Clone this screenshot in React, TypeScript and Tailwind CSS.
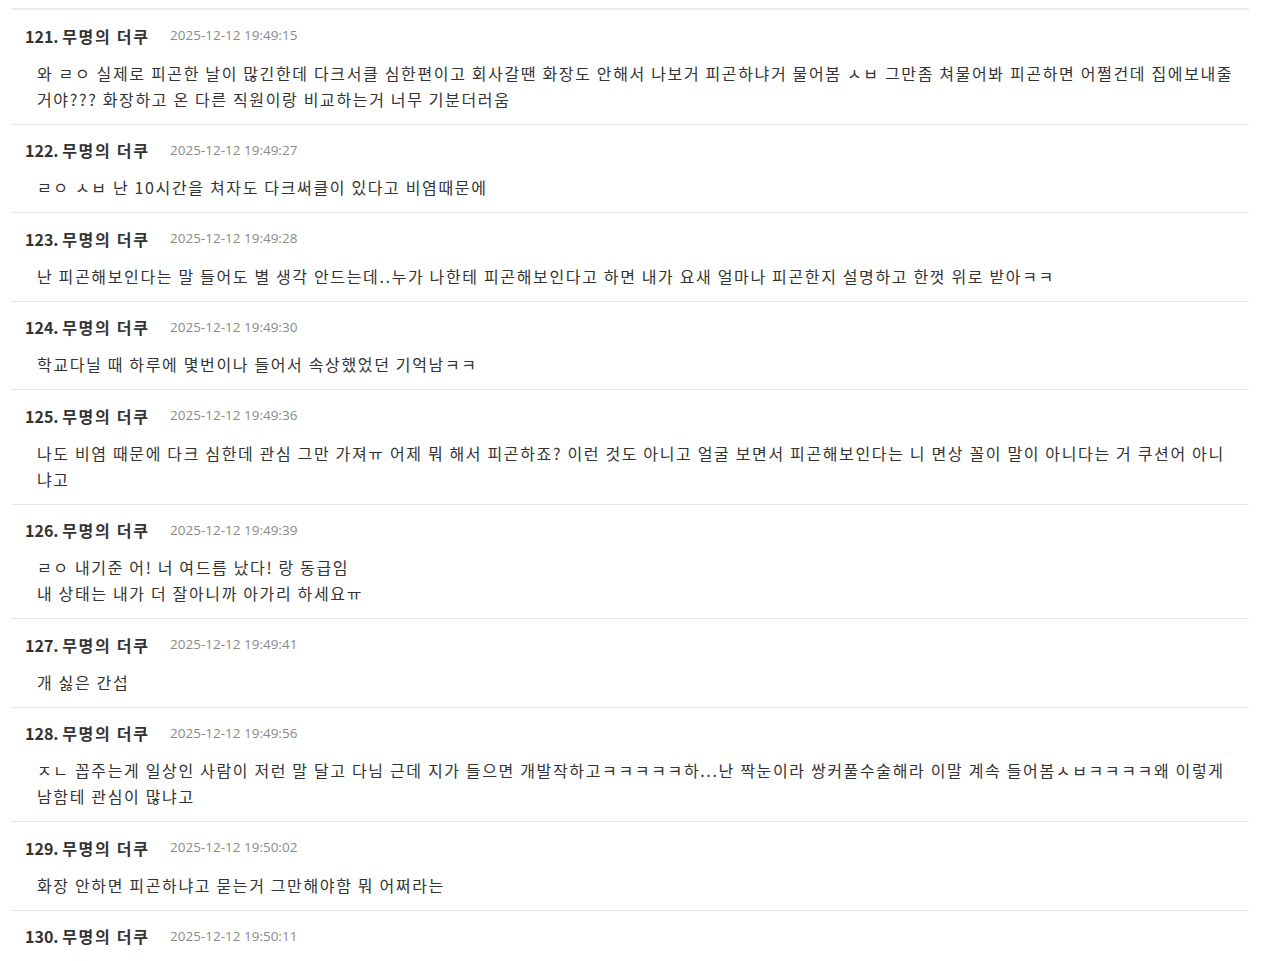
import React from "react";

type Item = { n: number; time: string; lines: string[] };

const items: Item[] = [
  {
    n: 121,
    time: "2025-12-12 19:49:15",
    lines: [
      "와 ㄹㅇ 실제로 피곤한 날이 많긴한데 다크서클 심한편이고 회사갈땐 화장도 안해서 나보거 피곤하냐거 물어봄 ㅅㅂ 그만좀 쳐물어봐 피곤하면 어쩔건데 집에보내줄 거야??? 화장하고 온 다른 직원이랑 비교하는거 너무 기분더러움",
    ],
  },
  { n: 122, time: "2025-12-12 19:49:27", lines: ["ㄹㅇ ㅅㅂ 난 10시간을 쳐자도 다크써클이 있다고 비염때문에"] },
  {
    n: 123,
    time: "2025-12-12 19:49:28",
    lines: [
      "난 피곤해보인다는 말 들어도 별 생각 안드는데..누가 나한테 피곤해보인다고 하면 내가 요새 얼마나 피곤한지 설명하고 한껏 위로 받아ㅋㅋ",
    ],
  },
  { n: 124, time: "2025-12-12 19:49:30", lines: ["학교다닐 때 하루에 몇번이나 들어서 속상했었던 기억남ㅋㅋ"] },
  {
    n: 125,
    time: "2025-12-12 19:49:36",
    lines: [
      "나도 비염 때문에 다크 심한데 관심 그만 가져ㅠ 어제 뭐 해서 피곤하죠? 이런 것도 아니고 얼굴 보면서 피곤해보인다는 니 면상 꼴이 말이 아니다는 거 쿠션어 아니냐고",
    ],
  },
  {
    n: 126,
    time: "2025-12-12 19:49:39",
    lines: ["ㄹㅇ 내기준 어! 너 여드름 났다! 랑 동급임", "내 상태는 내가 더 잘아니까 아가리 하세요ㅠ"],
  },
  { n: 127, time: "2025-12-12 19:49:41", lines: ["개 싫은 간섭"] },
  {
    n: 128,
    time: "2025-12-12 19:49:56",
    lines: [
      "ㅈㄴ 꼽주는게 일상인 사람이 저런 말 달고 다님 근데 지가 들으면 개발작하고ㅋㅋㅋㅋㅋ하...난 짝눈이라 쌍커풀수술해라 이말 계속 들어봄ㅅㅂㅋㅋㅋㅋ왜 이렇게 남함테 관심이 많냐고",
    ],
  },
  { n: 129, time: "2025-12-12 19:50:02", lines: ["화장 안하면 피곤하냐고 묻는거 그만해야함 뭐 어쩌라는"] },
  { n: 130, time: "2025-12-12 19:50:11", lines: [] },
];

export default function App() {
  return (
    <div
      className="bg-white min-h-screen pt-[8px] pl-[12px] pr-[17px]"
      style={{ fontFamily: '"Noto Sans CJK KR", sans-serif' }}
    >
      <div className="border-t-2 border-[#ebebeb]">
        {items.map((it, i) => (
          <div
            key={it.n}
            className={(i > 0 ? "border-t border-[#e6e6e6] " : "") + "pt-[13.5px] pb-[12px]"}
          >
            <div className="flex items-center pl-[13px] h-[24px]">
              <span className="text-[16px] font-bold text-[#333333] w-[145px] whitespace-nowrap">
                {it.n}. <span className="tracking-[1.7px]">무명의 더쿠</span>
              </span>
              <span
                className="text-[13.5px] text-[#8a8a8a]"
                style={{ fontFamily: '"Open Sans", sans-serif' }}
              >
                {it.time}
              </span>
            </div>
            {it.lines.length > 0 && (
              <div className="mt-[12px] pl-[25px] pr-[12px] text-[16px] leading-[26px] tracking-[1.65px] text-[#333333]">
                {it.lines.map((l, j) => (
                  <div key={j}>{l}</div>
                ))}
              </div>
            )}
          </div>
        ))}
      </div>
    </div>
  );
}
